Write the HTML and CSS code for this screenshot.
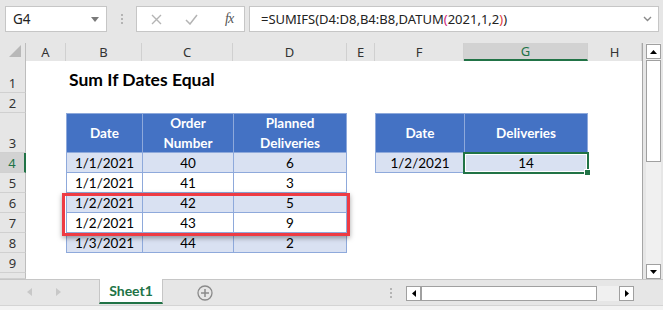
FILE: index.html
```html
<!DOCTYPE html>
<html>

<head>
  <title>Sum If Dates Equal</title>
  <link rel="stylesheet" href="styles.css">
</head>

<body>
  <div class="formula-bar">
    <div class="name-box">
      <span>G4</span>
      <svg class="caret" width="8" height="5" viewBox="0 0 8 5"><path d="M0 0h8L4 5z" fill="#7a7a7a"/></svg>
    </div>
    <div class="grip"><i></i><i></i><i></i></div>
    <div class="fx-buttons">
      <svg width="11" height="11" viewBox="0 0 11 11"><path d="M1 1l9 9M10 1l-9 9" stroke="#b4b4b4" stroke-width="1.4"/></svg>
      <svg width="13" height="11" viewBox="0 0 13 11"><path d="M1 6l4 4 7-9" stroke="#b4b4b4" stroke-width="1.5" fill="none"/></svg>
      <span class="fx">fx</span>
    </div>
    <div class="formula">
      <span>=SUMIFS(D4:D8,B4:B8,DATUM<b class="p1">(</b>2021,1,2<b class="p2">)</b>)</span>
      <svg class="chevron" width="9" height="6" viewBox="0 0 9 6"><path d="M1 1l3.5 3.5L8 1" stroke="#8a8a8a" stroke-width="1.4" fill="none"/></svg>
    </div>
  </div>

  <div class="main">
    <div class="sheet">
      <!-- column headers -->
      <div class="corner"><svg width="12" height="12" viewBox="0 0 12 12"><path d="M12 0v12H0z" fill="#b8b8b8"/></svg></div>
      <div class="colh">A</div>
      <div class="colh">B</div>
      <div class="colh">C</div>
      <div class="colh">D</div>
      <div class="colh">E</div>
      <div class="colh">F</div>
      <div class="colh sel">G</div>
      <div class="colh">H</div>

      <!-- row 1 -->
      <div class="rowh">1</div>
      <div></div>
      <div class="title">Sum If Dates Equal</div>
      <div></div><div></div><div></div><div></div><div></div><div></div>

      <!-- row 2 -->
      <div class="rowh">2</div>
      <div></div><div></div><div></div><div></div><div></div><div></div><div></div><div></div>

      <!-- row 3 -->
      <div class="rowh">3</div>
      <div></div>
      <div class="c hd top">Date</div>
      <div class="c hd top">Order<br>Number</div>
      <div class="c hd top last">Planned<br>Deliveries</div>
      <div></div>
      <div class="c hd top">Date</div>
      <div class="c hd top last">Deliveries</div>
      <div></div>

      <!-- row 4 -->
      <div class="rowh sel">4</div>
      <div></div>
      <div class="c band">1/1/2021</div>
      <div class="c band">40</div>
      <div class="c band last">6</div>
      <div></div>
      <div class="c band">1/2/2021</div>
      <div class="c band last">14</div>
      <div></div>

      <!-- row 5 -->
      <div class="rowh">5</div>
      <div></div>
      <div class="c">1/1/2021</div>
      <div class="c">41</div>
      <div class="c last">3</div>
      <div></div><div></div><div></div><div></div>

      <!-- row 6 -->
      <div class="rowh">6</div>
      <div></div>
      <div class="c band">1/2/2021</div>
      <div class="c band">42</div>
      <div class="c band last">5</div>
      <div></div><div></div><div></div><div></div>

      <!-- row 7 -->
      <div class="rowh">7</div>
      <div></div>
      <div class="c">1/2/2021</div>
      <div class="c">43</div>
      <div class="c last">9</div>
      <div></div><div></div><div></div><div></div>

      <!-- row 8 -->
      <div class="rowh">8</div>
      <div></div>
      <div class="c band">1/3/2021</div>
      <div class="c band">44</div>
      <div class="c band last">2</div>
      <div></div><div></div><div></div><div></div>

      <!-- row 9 -->
      <div class="rowh">9</div>
      <div></div><div></div><div></div><div></div><div></div><div></div><div></div><div></div>

      <!-- row 10 (cut off) -->
      <div class="rowh"></div>
      <div></div><div></div><div></div><div></div><div></div><div></div><div></div><div></div>

      <div class="highlight"></div>
      <div class="selection"><i class="handle"></i></div>
    </div>

    <div class="vscroll">
      <div class="arrow"><svg width="7" height="4" viewBox="0 0 7 4"><path d="M0 4h7L3.5 0z"/></svg></div>
      <div class="vthumb"></div>
      <div class="vtrack"></div>
      <div class="arrow"><svg width="7" height="4" viewBox="0 0 7 4"><path d="M0 0h7L3.5 4z"/></svg></div>
    </div>
  </div>

  <div class="tabbar">
    <div class="nav">
      <svg width="5" height="8" viewBox="0 0 5 8"><path d="M5 0v8L0 4z" fill="#c8c8c8"/></svg>
      <svg width="5" height="8" viewBox="0 0 5 8"><path d="M0 0v8l5-4z" fill="#c8c8c8"/></svg>
    </div>
    <div class="tab">Sheet1</div>
    <div class="add">
      <svg width="16" height="16" viewBox="0 0 16 16"><circle cx="8" cy="8" r="7" stroke="#8a8a8a" stroke-width="1.3" fill="none"/><path d="M8 4v8M4 8h8" stroke="#8a8a8a" stroke-width="1.5"/></svg>
    </div>
    <div class="grip tab-grip"><i></i><i></i><i></i></div>
    <div class="hscroll">
      <div class="arrow"><svg width="4" height="7" viewBox="0 0 4 7"><path d="M4 0v7L0 3.5z"/></svg></div>
      <div class="hthumb"></div>
      <div class="htrack"></div>
      <div class="arrow"><svg width="4" height="7" viewBox="0 0 4 7"><path d="M0 0v7l4-3.5z"/></svg></div>
    </div>
  </div>
  <div class="status"></div>
</body>

</html>
```

FILE: styles.css
```css
body {
  margin: 0;
  width: 663px;
  height: 310px;
  overflow: hidden;
  background-color: #e6e6e6;
  font-family: "Noto Sans", "Open Sans", sans-serif;
}

/* formula bar */
.formula-bar {
  display: flex;
  align-items: center;
  height: 43px;
  padding-left: 5px;
  padding-bottom: 5px;
  box-sizing: border-box;
}
.name-box {
  display: flex;
  align-items: center;
  justify-content: space-between;
  width: 102px;
  height: 26px;
  box-sizing: border-box;
  padding: 0 7px 0 7px;
  background-color: #fff;
  border: 1px solid #c6c6c6;
  font-size: 13.5px;
  color: #222;
}
.grip {
  display: flex;
  flex-direction: column;
  gap: 2px;
  margin: 0 13px 0 14px;
}
.grip i {
  width: 2px;
  height: 2px;
  background-color: #b4b4b4;
}
.fx-buttons {
  display: flex;
  align-items: center;
  width: 109px;
  height: 26px;
  box-sizing: border-box;
  padding-left: 14px;
  background-color: #fff;
  border: 1px solid #c6c6c6;
}
.fx-buttons svg {
  margin-right: 23px;
}
.fx {
  font-family: "Liberation Serif", serif;
  font-style: italic;
  font-size: 14px;
  color: #555;
  margin-left: 4px;
  letter-spacing: -1px;
}
.formula {
  display: flex;
  align-items: center;
  justify-content: space-between;
  width: 410px;
  height: 26px;
  box-sizing: border-box;
  margin-left: 4px;
  padding: 0 6px 0 11px;
  background-color: #fff;
  border: 1px solid #c6c6c6;
  font-size: 13px;
  color: #222;
}
.formula b {
  font-weight: normal;
}
.p1 {
  color: #d1267a;
}
.p2 {
  color: #e0383e;
}

/* sheet */
.main {
  display: flex;
  height: 236px;
}
.sheet {
  position: relative;
  display: grid;
  grid-template-columns: 26px 40px 76px 91px 114px 28px 89px 124px 54px;
  grid-template-rows: 18px 32px 20px 40px repeat(6, 20px) 6px;
  background-color: #fff;
  border-right: 1px solid #a6a6a6;
  font-family: Lato, "Open Sans", sans-serif;
  font-size: 13.5px;
  color: #000;
}
.corner {
  display: flex;
  align-items: flex-end;
  justify-content: flex-end;
  padding: 0 4px 4px 0;
  background-color: #e6e6e6;
  border-right: 1px solid #bdbdbd;
}
.colh {
  display: flex;
  align-items: center;
  justify-content: center;
  background-color: #e6e6e6;
  border-right: 1px solid #d0d0d0;
  font-family: "Noto Sans", sans-serif;
  font-size: 13px;
  color: #333;
}
.colh:last-of-type {
  border-right: none;
}
.colh.sel {
  background-color: #d2d2d2;
  border-bottom: 2px solid #217346;
  color: #217346;
}
.rowh {
  display: flex;
  align-items: flex-end;
  justify-content: center;
  background-color: #e6e6e6;
  border-right: 1px solid #bdbdbd;
  border-bottom: 1px solid #d0d0d0;
  font-family: "Noto Sans", sans-serif;
  font-size: 13px;
  line-height: 18px;
  color: #333;
}
.rowh.sel {
  background-color: #d2d2d2;
  border-right: 2px solid #217346;
  color: #217346;
}
.title {
  display: flex;
  align-items: flex-end;
  padding: 0 0 3px 3px;
  white-space: nowrap;
  font-weight: bold;
  font-size: 17.5px;
}
.c {
  display: flex;
  align-items: center;
  justify-content: center;
  border-left: 1px solid #8ea9db;
  border-bottom: 1px solid #8ea9db;
  line-height: 20px;
}
.c.last {
  border-right: 1px solid #8ea9db;
}
.c.top {
  border-top: 1px solid #8ea9db;
}
.c.band {
  background-color: #d9e1f2;
}
.c.hd {
  background-color: #4472c4;
  color: #fff;
  font-weight: bold;
  text-align: center;
}

.highlight {
  position: absolute;
  left: 62px;
  top: 150px;
  width: 288px;
  height: 43px;
  box-sizing: border-box;
  border: 3px solid #ee3b43;
  box-shadow: 0 2px 5px rgba(0, 0, 0, 0.35);
}
.selection {
  position: absolute;
  left: 463px;
  top: 109px;
  width: 126px;
  height: 22px;
  box-sizing: border-box;
  border: 2px solid #217346;
  box-shadow: inset 0 0 0 1px #fff;
}
.handle {
  position: absolute;
  right: -4px;
  bottom: -4px;
  width: 5px;
  height: 5px;
  background-color: #217346;
  border: 1px solid #fff;
}

/* scrollbars */
.vscroll {
  display: flex;
  flex-direction: column;
  width: 15px;
  margin-left: 3px;
  padding-top: 1px;
  background-color: #f0f0f0;
}
.arrow {
  display: flex;
  align-items: center;
  justify-content: center;
  width: 15px;
  height: 15px;
  box-sizing: border-box;
  background-color: #fff;
  border: 1px solid #a0a0a0;
}
.vthumb {
  height: 102px;
  margin-top: 1px;
  background-color: #fff;
  border: 1px solid #a0a0a0;
  box-sizing: border-box;
}
.vtrack {
  flex: 1;
}

.tabbar {
  display: flex;
  align-items: flex-start;
  height: 26px;
  border-top: 1px solid #c6c6c6;
  box-sizing: border-box;
}
.nav {
  display: flex;
  align-items: center;
  gap: 24px;
  width: 72px;
  height: 24px;
  padding-left: 27px;
}
.tab {
  width: 64px;
  height: 25px;
  margin-top: -1px;
  box-sizing: border-box;
  background-color: #fff;
  border-left: 1px solid #c6c6c6;
  border-right: 1px solid #c6c6c6;
  border-bottom: 2px solid #217346;
  text-align: center;
  font-family: Lato, sans-serif;
  font-weight: bold;
  font-size: 14px;
  line-height: 24px;
  color: #217346;
}
.add {
  display: flex;
  align-items: center;
  height: 25px;
  margin-left: 34px;
}
.tab-grip {
  margin: 8px 0 0 177px;
}
.hscroll {
  display: flex;
  width: 228px;
  margin: 6px 0 0 14px;
  background-color: #f0f0f0;
}
.hthumb {
  width: 176px;
  height: 15px;
  box-sizing: border-box;
  background-color: #fff;
  border: 1px solid #a0a0a0;
}
.htrack {
  flex: 1;
}
.status {
  height: 5px;
  border-top: 1px solid #d4d4d4;
  background-color: #f3f3f3;
}
```
